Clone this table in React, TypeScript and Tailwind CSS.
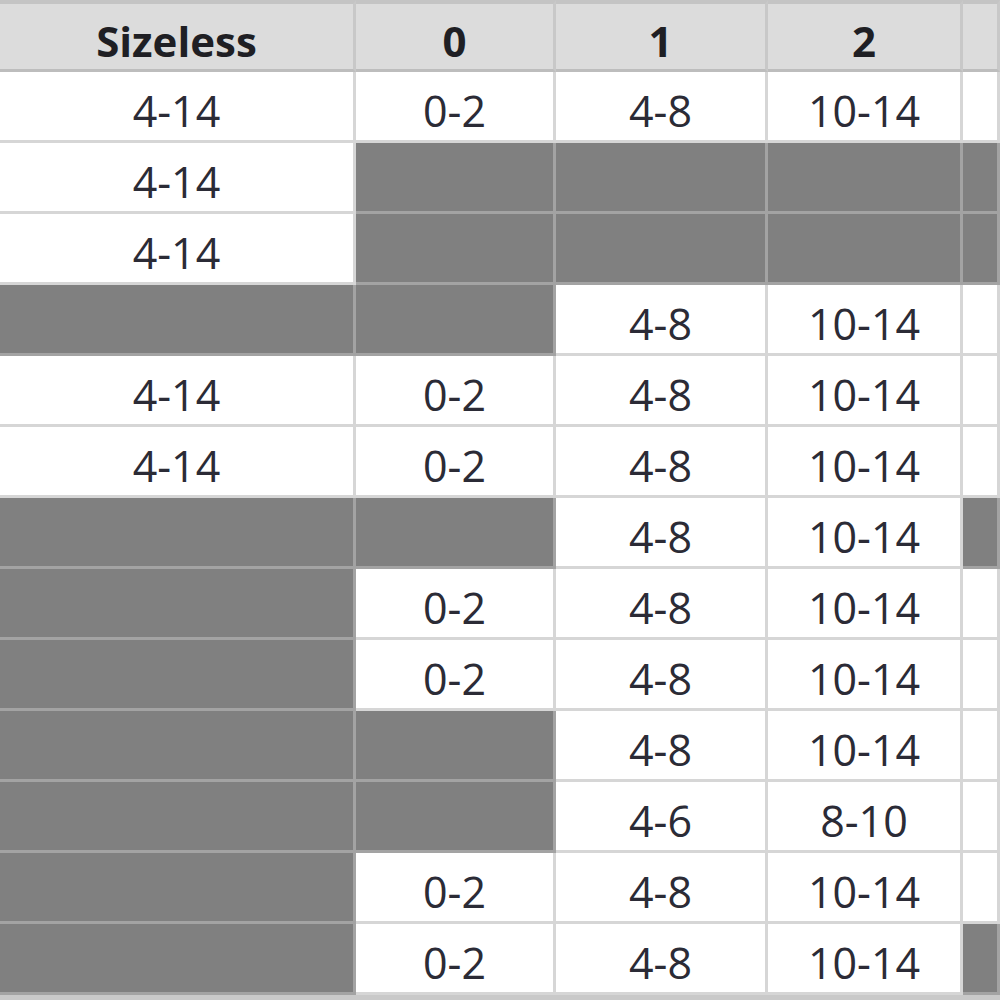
const G = null;

const header = ["Sizeless", "0", "1", "2", ""];

const rows: (string | null)[][] = [
  ["4-14", "0-2", "4-8", "10-14", ""],
  ["4-14", G, G, G, G],
  ["4-14", G, G, G, G],
  [G, G, "4-8", "10-14", ""],
  ["4-14", "0-2", "4-8", "10-14", ""],
  ["4-14", "0-2", "4-8", "10-14", ""],
  [G, G, "4-8", "10-14", G],
  [G, "0-2", "4-8", "10-14", ""],
  [G, "0-2", "4-8", "10-14", ""],
  [G, G, "4-8", "10-14", ""],
  [G, G, "4-6", "8-10", ""],
  [G, "0-2", "4-8", "10-14", ""],
  [G, "0-2", "4-8", "10-14", G],
];

function Cell({ value }: { value: string | null }) {
  if (value === null) {
    return (
      <div className="h-[71px] border-r-[3px] border-b-[3px] border-[#a3a3a3] bg-[#808080]" />
    );
  }
  return (
    <div className="flex h-[71px] items-center justify-center border-r-[3px] border-b-[3px] border-[#d6d6d6] bg-white pt-2 text-[43px] leading-none text-[#2b2b36]">
      {value}
    </div>
  );
}

export default function App() {
  return (
    <div
      className="h-[1000px] w-[1000px] overflow-hidden bg-[#c9c9c9]"
      style={{ fontFamily: '"Open Sans", "Liberation Sans", sans-serif' }}
    >
      <div className="grid grid-cols-[356px_200px_212px_195px_1fr]">
        {header.map((h, i) => (
          <div
            key={i}
            className="flex h-[72px] items-center justify-center border-t-4 border-r-[3px] border-b-[3px] border-r-[#c8c8c8] border-t-[#c4c4c4] border-b-[#bdbdbd] bg-[#dcdcdc] pt-2 text-[42px] font-bold leading-none text-[#1f1f24]"
          >
            {h}
          </div>
        ))}
        {rows.map((r, ri) =>
          r.map((v, ci) => <Cell key={`${ri}-${ci}`} value={v} />)
        )}
      </div>
    </div>
  );
}
